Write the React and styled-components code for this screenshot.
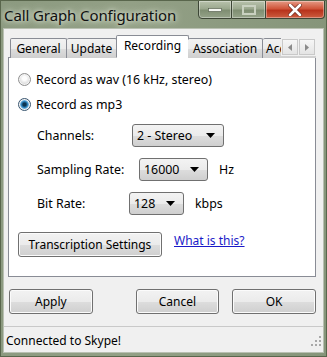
import { styled, createGlobalStyle } from "styled-components";

const Global = createGlobalStyle`
  html, body { margin: 0; padding: 0; background: #8e9b82; }
  body { font-family: "Noto Sans", "Open Sans", sans-serif; }
`;

const Window = styled.div`
  width: 327px;
  height: 357px;
  display: flex;
  flex-direction: column;
  background: linear-gradient(90deg, #8c9a80 0%, #93a086 40%, #86957a 100%);
  border: 1px solid #59664c;
  box-sizing: border-box;
  overflow: hidden;
`;

const TitleBar = styled.div`
  height: 27px;
  display: flex;
  justify-content: space-between;
  align-items: flex-start;
  flex-shrink: 0;
`;

const Title = styled.div`
  margin: 4px 0 0 3px;
  font-size: 15px;
  color: #101010;
  text-shadow: 0 0 8px #e8eee0, 0 0 4px #dfe7d6;
  letter-spacing: -0.1px;
`;

const Caption = styled.div`
  display: flex;
  margin-right: 1px;
  margin-top: -1px;
`;

const CapButton = styled.div`
  width: ${(p) => p.$w}px;
  height: 19px;
  display: flex;
  align-items: center;
  justify-content: center;
  box-sizing: border-box;
  border: 1px solid #3d4636;
  border-left: ${(p) => (p.$first ? "1px solid #3d4636" : "none")};
  border-radius: ${(p) => p.$radius};
  background: ${(p) =>
    p.$close
      ? "linear-gradient(#e59a85 0%, #d0553a 45%, #b8331c 55%, #cc5d3f 100%)"
      : "linear-gradient(#b8c2ac 0%, #9ba88e 45%, #7f8e72 55%, #95a389 100%)"};
  box-shadow: inset 0 0 0 1px rgba(255, 255, 255, 0.35);
`;

const Client = styled.div`
  flex: 1;
  margin: 0 2px 3px 2px;
  background: #f0f0f0;
  border: 1px solid #b9c0b2;
  display: flex;
  flex-direction: column;
  min-height: 0;
`;

const Body = styled.div`
  padding: 6px 7px 0 4px;
  display: flex;
  flex-direction: column;
  flex: 1;
`;

const TabStrip = styled.div`
  display: flex;
  align-items: flex-end;
  height: 23px;
  padding-left: 2px;
  position: relative;
  z-index: 1;
  overflow: hidden;
`;

const Tab = styled.div`
  height: ${(p) => (p.$active ? 23 : 20)}px;
  width: ${(p) => p.$w}px;
  box-sizing: border-box;
  flex-shrink: 0;
  border: 1px solid #898c95;
  border-bottom: ${(p) => (p.$active ? "1px solid #fff" : "none")};
  border-left: ${(p) => (p.$noLeft ? "none" : "1px solid #898c95")};
  margin-left: ${(p) => (p.$active ? -1 : 0)}px;
  margin-right: ${(p) => (p.$active ? -1 : 0)}px;
  background: ${(p) =>
    p.$active ? "#fff" : "linear-gradient(#f2f2f2 0%, #ebebeb 50%, #dddddd 51%, #cfcfcf 100%)"};
  border-radius: 2px 2px 0 0;
  font-size: 12px;
  color: #000;
  padding: 2px 0 0 ${(p) => p.$pl || 0}px;
  text-align: ${(p) => (p.$pl ? "left" : "center")};
  white-space: nowrap;
  overflow: hidden;
  line-height: 16px;
`;

const Scroller = styled.div`
  position: absolute;
  right: 0;
  bottom: 2px;
  display: flex;
  background: #f0f0f0;
  padding: 1px 1px 1px 1px;
  gap: 1px;
`;

const ScrollBtn = styled.div`
  width: 16px;
  height: 16px;
  box-sizing: border-box;
  border: 1px solid #c9c9c9;
  background: linear-gradient(#f6f6f6, #e4e4e4);
  display: flex;
  align-items: center;
  justify-content: center;
`;

const Panel = styled.div`
  height: 220px;
  margin-top: -1px;
  background: #fff;
  border: 1px solid #898c95;
  box-sizing: border-box;
  padding: 13px 0 0 9px;
  display: flex;
  flex-direction: column;
  font-size: 12.4px;
`;

const RadioRow = styled.label`
  display: flex;
  align-items: center;
  height: 16px;
  margin-bottom: 9px;
  color: #000;
  gap: 5px;
`;

const RadioCircle = styled.span`
  width: 13px;
  height: 13px;
  border-radius: 50%;
  box-sizing: border-box;
  border: 1px solid ${(p) => (p.$on ? "#3a5670" : "#8f8f8f")};
  background: ${(p) =>
    p.$on
      ? "radial-gradient(circle at 50% 50%, #0c3450 0 1.5px, #2a7fba 3px, #8cc6ec 4.5px, #e6eef4 5px)"
      : "radial-gradient(circle at 50% 40%, #fdfdfd 0 2px, #e0e0e0 5px)"};
  box-shadow: inset 0 0 0 1px #f4f4f4;
  flex-shrink: 0;
`;

const Field = styled.div`
  display: flex;
  align-items: center;
  height: 23px;
  padding-left: 19px;
  margin-top: ${(p) => p.$mt}px;
`;

const FieldLabel = styled.span`
  width: ${(p) => p.$w}px;
  flex-shrink: 0;
`;

const Select = styled.div`
  width: ${(p) => p.$w}px;
  height: 23px;
  box-sizing: border-box;
  border: 1px solid #707070;
  border-radius: 3px;
  background: linear-gradient(#f3f3f3 0%, #ebebeb 50%, #dddddd 51%, #cfcfcf 100%);
  display: flex;
  align-items: center;
  justify-content: space-between;
  padding: 0 8px 0 4px;
`;

const Unit = styled.span`
  margin-left: 11px;
`;

const ActionRow = styled.div`
  display: flex;
  align-items: flex-start;
  margin-top: 17px;
  gap: 12px;
`;

const Button = styled.div`
  width: ${(p) => p.$w}px;
  height: 25px;
  box-sizing: border-box;
  border: 1px solid #707070;
  border-radius: 3px;
  background: linear-gradient(#f2f2f2 0%, #ebebeb 50%, #dddddd 51%, #cfcfcf 100%);
  box-shadow: inset 0 0 0 1px #fbfbfb;
  display: flex;
  align-items: center;
  justify-content: center;
  font-size: 12px;
  color: #000;
`;

const Link = styled.a`
  color: #1a1ac8;
  text-decoration: underline;
  font-size: 12px;
  margin-top: 0px;
`;

const ButtonRow = styled.div`
  display: flex;
  margin-top: 12px;
  padding-left: 1px;
`;

const Spacer = styled.div`
  width: ${(p) => p.$w}px;
`;

const StatusBar = styled.div`
  margin-top: 12px;
  height: 26px;
  border-top: 1px solid #c9c9c9;
  display: flex;
  align-items: center;
  justify-content: space-between;
  padding: 0 2px 0 2px;
  font-size: 12px;
  flex-shrink: 0;
`;

const Arrow = () => (
  <svg width="9" height="5" viewBox="0 0 9 5">
    <path d="M0 0 H9 L4.5 5 Z" fill="#000" />
  </svg>
);

export default function App() {
  return (
    <>
      <Global />
      <Window>
        <TitleBar>
          <Title>Call Graph Configuration</Title>
          <Caption>
            <CapButton $w={34} $first $radius="0 0 0 4px">
              <svg width="14" height="4" viewBox="0 0 14 4">
                <rect x="0.5" y="0.5" width="13" height="3" fill="#f4f6f1" stroke="#4b5643" strokeWidth="0.6" />
              </svg>
            </CapButton>
            <CapButton $w={34} $radius="0">
              <svg width="14" height="10" viewBox="0 0 14 10">
                <rect x="1" y="1" width="12" height="8" fill="none" stroke="#c9d1c0" strokeWidth="2" />
              </svg>
            </CapButton>
            <CapButton $w={59} $close $radius="0 0 4px 0">
              <svg width="14" height="12" viewBox="0 0 14 12">
                <path d="M2 1 L12 11 M12 1 L2 11" stroke="#6b2a1c" strokeWidth="4" strokeLinecap="round" />
                <path d="M2 1 L12 11 M12 1 L2 11" stroke="#fff" strokeWidth="2.6" strokeLinecap="round" />
              </svg>
            </CapButton>
          </Caption>
        </TitleBar>
        <Client>
          <Body>
            <TabStrip>
              <Tab $w={57}>General</Tab>
              <Tab $w={50} $noLeft>Update</Tab>
              <Tab $w={73} $active>Recording</Tab>
              <Tab $w={75} $noLeft>Association</Tab>
              <Tab $w={60} $noLeft $pl={3}>Accounts</Tab>
              <Scroller>
                <ScrollBtn>
                  <svg width="4" height="7" viewBox="0 0 4 7"><path d="M4 0 V7 L0 3.5 Z" fill="#8a8a8a" /></svg>
                </ScrollBtn>
                <ScrollBtn>
                  <svg width="4" height="7" viewBox="0 0 4 7"><path d="M0 0 V7 L4 3.5 Z" fill="#8a8a8a" /></svg>
                </ScrollBtn>
              </Scroller>
            </TabStrip>
            <Panel>
              <RadioRow>
                <RadioCircle />
                Record as wav (16 kHz, stereo)
              </RadioRow>
              <RadioRow>
                <RadioCircle $on />
                Record as mp3
              </RadioRow>
              <Field $mt={3}>
                <FieldLabel $w={95}>Channels:</FieldLabel>
                <Select $w={92}>
                  2 - Stereo <Arrow />
                </Select>
              </Field>
              <Field $mt={11}>
                <FieldLabel $w={102}>Sampling Rate:</FieldLabel>
                <Select $w={69}>
                  16000 <Arrow />
                </Select>
                <Unit>Hz</Unit>
              </Field>
              <Field $mt={11}>
                <FieldLabel $w={92}>Bit Rate:</FieldLabel>
                <Select $w={55}>
                  128 <Arrow />
                </Select>
                <Unit>kbps</Unit>
              </Field>
              <ActionRow>
                <Button $w={144}>Transcription Settings</Button>
                <Link href="#">What is this?</Link>
              </ActionRow>
            </Panel>
            <ButtonRow>
              <Button $w={84}>Apply</Button>
              <Spacer $w={43} />
              <Button $w={84}>Cancel</Button>
              <Spacer $w={13} />
              <Button $w={84}>OK</Button>
            </ButtonRow>
          </Body>
          <StatusBar>
            <span>Connected to Skype!</span>
            <svg width="11" height="11" viewBox="0 0 11 11">
              {[[9, 1], [9, 5], [5, 5], [9, 9], [5, 9], [1, 9]].map(([x, y]) => (
                <rect key={`${x}-${y}`} x={x} y={y} width="2" height="2" fill="#a8a8a8" />
              ))}
            </svg>
          </StatusBar>
        </Client>
      </Window>
    </>
  );
}
